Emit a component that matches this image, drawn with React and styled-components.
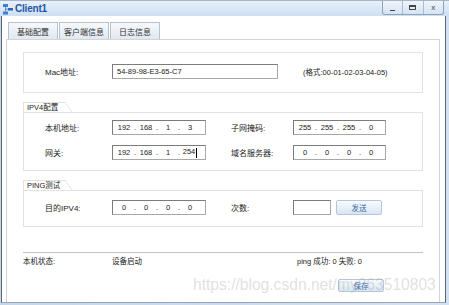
import React from "react";
import styled, { createGlobalStyle } from "styled-components";

const GlobalStyle = createGlobalStyle`
  html, body {
    margin: 0;
    padding: 0;
    background: #fff;
  }
  body {
    width: 449px;
    height: 305px;
    overflow: hidden;
    font-family: "Liberation Sans", "Noto Sans CJK SC", sans-serif;
    color: #222;
  }
`;

const Window = styled.div`
  position: relative;
  width: 449px;
  height: 305px;
  display: flex;
  flex-direction: column;
  background: linear-gradient(90deg, #c3d6ec, #d3e2f3);
`;

const TitleBar = styled.div`
  height: 16px;
  flex: none;
  display: flex;
  align-items: center;
  padding-left: 3px;
  box-sizing: border-box;
  border-top: 1px solid #a7b6c7;
  background: linear-gradient(#e8f0fa, #cddff2);
`;

const Title = styled.span`
  margin-left: 2px;
  font-size: 10px;
  font-weight: bold;
  color: #2256a6;
  letter-spacing: -0.2px;
`;

const Controls = styled.div`
  margin-left: auto;
  margin-right: 5px;
  align-self: flex-start;
  width: 62px;
  height: 14px;
  display: flex;
  box-sizing: border-box;
  border: 1px solid #8ea2ba;
  border-top: none;
  border-radius: 0 0 3px 3px;
  background: linear-gradient(#eef4fb, #d6e4f3);
`;

const CtlButton = styled.div`
  flex: 1;
  display: flex;
  align-items: center;
  justify-content: center;
  font-size: 8px;
  color: #444;
  & + & {
    border-left: 1px solid #a9bbcf;
  }
`;

const MinGlyph = styled.div`
  width: 5px;
  height: 1px;
  margin-top: 5px;
  background: #444;
`;

const MaxGlyph = styled.div`
  width: 7px;
  height: 5px;
  box-sizing: border-box;
  border: 1px solid #444;
  border-top-width: 2px;
`;

const Body = styled.div`
  flex: 1;
  min-height: 0;
  display: flex;
  flex-direction: column;
  margin: 0 3px 2px 1px;
  padding: 6px 5px 0 4px;
  background: #fff;
  border-left: 1px solid #5d646e;
  border-right: 1px solid #5d646e;
  border-bottom: 1px solid #98a6b6;
`;

const TabRow = styled.div`
  display: flex;
  gap: 1px;
  margin-left: 2px;
  height: 17px;
  flex: none;
`;

const Tab = styled.div`
  width: 50px;
  box-sizing: border-box;
  border: 1px solid #b8c2cd;
  border-bottom: none;
  background: linear-gradient(#f6f9fc, #e1e8f0);
  display: flex;
  align-items: center;
  justify-content: center;
  font-size: 8px;
  color: #333;
`;

const Panel = styled.div`
  flex: 1;
  display: flex;
  flex-direction: column;
  border: 1px solid #d0d5db;
  border-bottom: none;
  padding: 12px 16px 0;
`;

const GroupBox = styled.div`
  display: flex;
  flex-direction: column;
  gap: 10px;
  padding: ${(p) => p.pad};
  border: 1px solid #e2e2e2;
`;

const Legend = styled.div`
  position: relative;
  align-self: flex-start;
  width: 42px;
  height: 10px;
  margin-top: 9px;
  padding-left: 3px;
  box-sizing: border-box;
  border-top: 1px solid #e2e2e2;
  border-left: 1px solid #e2e2e2;
  font-size: 7.5px;
  line-height: 9px;
  white-space: nowrap;
  &::after {
    content: "";
    position: absolute;
    top: -1px;
    right: -7px;
    width: 7px;
    height: 10px;
    background: linear-gradient(
      to top right,
      transparent calc(50% - 0.6px),
      #dcdcdc 50%,
      transparent calc(50% + 0.6px)
    );
  }
`;

const Row = styled.div`
  display: flex;
  align-items: center;
  height: 15px;
`;

const Label = styled.span`
  flex: none;
  width: ${(p) => p.w}px;
  margin-left: ${(p) => p.ml || 0}px;
  font-size: 8px;
  white-space: nowrap;
`;

const Field = styled.div`
  flex: none;
  width: ${(p) => p.w}px;
  height: 15px;
  box-sizing: border-box;
  border: 1px solid #a8a8a8;
  border-top-color: #7c7c7c;
  border-left-color: #7c7c7c;
  background: #fff;
  display: flex;
  align-items: center;
  padding-left: ${(p) => (p.ip ? 3 : 4)}px;
  font-size: 7.5px;
  color: #222;
  white-space: nowrap;
`;

const Seg = styled.span`
  width: 16px;
  text-align: center;
`;

const Dot = styled.span`
  width: 6px;
  text-align: center;
`;

const Caret = styled.span`
  display: inline-block;
  width: 1px;
  height: 10px;
  margin-left: 1px;
  vertical-align: middle;
  background: #000;
`;

const Hint = styled.span`
  margin-left: 25px;
  font-size: 7.5px;
  white-space: nowrap;
`;

const Button = styled.div`
  flex: none;
  width: 46px;
  height: ${(p) => p.h || 15}px;
  margin-left: ${(p) => p.ml || 0}px;
  box-sizing: border-box;
  border: 1px solid #b5c6da;
  border-radius: 2px;
  background: linear-gradient(#f8fbfe, #d9e5f2);
  display: flex;
  align-items: center;
  justify-content: center;
  font-size: 7.5px;
  color: #3a6ca6;
`;

const StatusBar = styled.div`
  display: flex;
  margin-top: 25px;
  padding-top: 2px;
  border-top: 1px solid #c4c4c4;
  font-size: 7.5px;
  color: #222;
  height: 10px;
`;

const StatusCell = styled.span`
  width: ${(p) => (p.w ? `${p.w}px` : "auto")};
  flex: none;
  white-space: nowrap;
  color: #222;
`;

const SaveRow = styled.div`
  display: flex;
  justify-content: flex-end;
  padding-right: 39px;
  margin-top: 14px;
`;

const Watermark = styled.div`
  position: absolute;
  left: 193px;
  top: 276px;
  font-family: "Liberation Sans", sans-serif;
  font-size: 15.6px;
  line-height: 18px;
  color: rgba(150, 150, 150, 0.3);
  white-space: nowrap;
  pointer-events: none;
`;

const AppIcon = () => (
  <svg width="10" height="12" viewBox="0 0 10 12">
    <rect x="0" y="1" width="5" height="3" fill="#3b7fd6" />
    <rect x="5" y="5" width="5" height="2.5" fill="#2a62b5" />
    <rect x="0" y="8.5" width="5" height="3" fill="#3b7fd6" />
    <path d="M2.5 4v4.5M2.5 6.2h2.5" stroke="#6f8aa8" strokeWidth="1" fill="none" />
  </svg>
);

const IpField = ({ w, parts, caret }) => (
  <Field w={w} ip>
    {parts.map((p, i) => (
      <React.Fragment key={i}>
        {i > 0 && <Dot>.</Dot>}
        <Seg>
          {p}
          {caret && i === parts.length - 1 && <Caret />}
        </Seg>
      </React.Fragment>
    ))}
  </Field>
);

export default function App() {
  return (
    <>
      <GlobalStyle />
      <Window>
        <TitleBar>
          <AppIcon />
          <Title>Client1</Title>
          <Controls>
            <CtlButton>
              <MinGlyph />
            </CtlButton>
            <CtlButton>
              <MaxGlyph />
            </CtlButton>
            <CtlButton>x</CtlButton>
          </Controls>
        </TitleBar>
        <Body>
          <TabRow>
            <Tab>基础配置</Tab>
            <Tab>客户端信息</Tab>
            <Tab>日志信息</Tab>
          </TabRow>
          <Panel>
            <GroupBox pad="11px 0 13px 21px">
              <Row>
                <Label w={67}>Mac地址:</Label>
                <Field w={166}>54-89-98-E3-65-C7</Field>
                <Hint>(格式:00-01-02-03-04-05)</Hint>
              </Row>
            </GroupBox>

            <Legend>IPV4配置</Legend>
            <GroupBox pad="7px 0 10px 21px">
              <Row>
                <Label w={67}>本机地址:</Label>
                <IpField w={94} parts={["192", "168", "1", "3"]} />
                <Label w={62} ml={25}>子网掩码:</Label>
                <IpField w={93} parts={["255", "255", "255", "0"]} />
              </Row>
              <Row>
                <Label w={67}>网关:</Label>
                <IpField w={94} parts={["192", "168", "1", "254"]} caret />
                <Label w={62} ml={25}>域名服务器:</Label>
                <IpField w={93} parts={["0", "0", "0", "0"]} />
              </Row>
            </GroupBox>

            <Legend>PING测试</Legend>
            <GroupBox pad="9px 0 11px 21px">
              <Row>
                <Label w={67}>目的IPV4:</Label>
                <IpField w={94} parts={["0", "0", "0", "0"]} />
                <Label w={62} ml={25}>次数:</Label>
                <Field w={38} />
                <Button ml={5}>发送</Button>
              </Row>
            </GroupBox>

            <StatusBar>
              <StatusCell w={89}>本机状态:</StatusCell>
              <StatusCell w={185}>设备启动</StatusCell>
              <StatusCell>ping 成功: 0 失败: 0</StatusCell>
            </StatusBar>

            <SaveRow>
              <Button h={13}>保存</Button>
            </SaveRow>
          </Panel>
        </Body>
        <Watermark>https://blog.csdn.net/my063510803</Watermark>
      </Window>
    </>
  );
}
